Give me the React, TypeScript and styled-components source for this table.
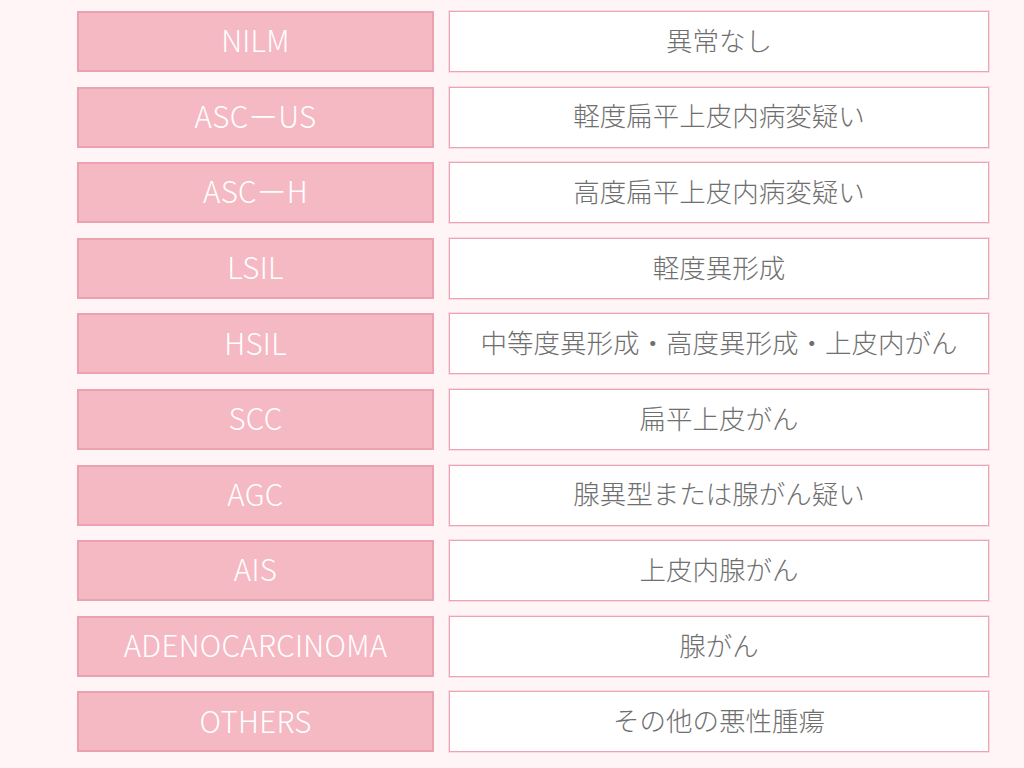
import React from 'react';
import styled, { createGlobalStyle } from 'styled-components';

const GlobalStyle = createGlobalStyle`
  html, body {
    margin: 0;
    padding: 0;
    background: #fff4f6;
  }
`;

const StyledTable = styled.div`
  display: grid;
  grid-template-columns: 357px 540px;
  grid-auto-rows: 61px;
  column-gap: 15px;
  row-gap: 14.6px;
  padding: 11px 0 0 77px;
  height: 768px;
  box-sizing: border-box;
  font-family: "Noto Sans CJK JP", "Noto Sans", sans-serif;
`;

const Cell = styled.div<{ $code?: boolean }>`
  display: flex;
  align-items: center;
  justify-content: center;
  box-sizing: border-box;
  padding-bottom: 3px;
  line-height: 1;
  font-size: ${({ $code }) => ($code ? '29.5px' : '26.5px')};
  font-weight: 300;
  letter-spacing: ${({ $code }) => ($code ? '0.3px' : '0')};
  color: ${({ $code }) => ($code ? '#ffffff' : '#6f6f6f')};
  background: ${({ $code }) => ($code ? '#f5b9c4' : '#ffffff')};
  border: ${({ $code }) => ($code ? '2px solid #eba1b0' : '1px solid #eca3b3')};
  box-shadow: ${({ $code }) => ($code ? 'none' : '0 0 0 1px #f9dbe1')};
`;

const rows = [
  ['NILM', '異常なし'],
  ['ASCーUS', '軽度扁平上皮内病変疑い'],
  ['ASCーH', '高度扁平上皮内病変疑い'],
  ['LSIL', '軽度異形成'],
  ['HSIL', '中等度異形成・高度異形成・上皮内がん'],
  ['SCC', '扁平上皮がん'],
  ['AGC', '腺異型または腺がん疑い'],
  ['AIS', '上皮内腺がん'],
  ['ADENOCARCINOMA', '腺がん'],
  ['OTHERS', 'その他の悪性腫瘍'],
];

export default function App() {
  return (
    <>
      <GlobalStyle />
      <StyledTable>
        {rows.map(([code, label]) => (
          <React.Fragment key={code}>
            <Cell $code>{code}</Cell>
            <Cell>{label}</Cell>
          </React.Fragment>
        ))}
      </StyledTable>
    </>
  );
}
